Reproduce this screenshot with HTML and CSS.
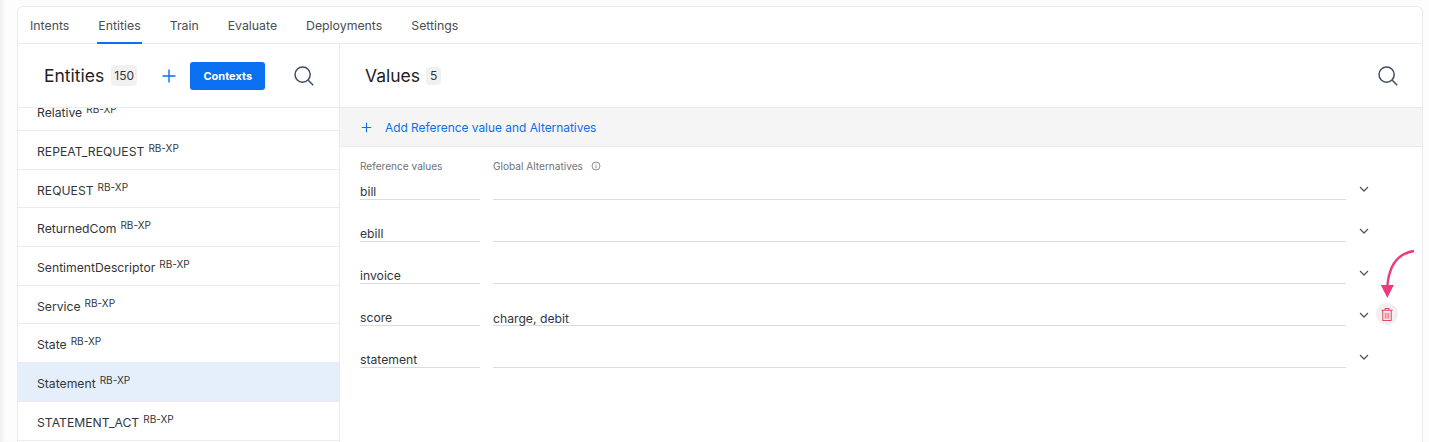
FILE: index.html
```html
<!DOCTYPE html>
<html lang="en">
<head>
<meta charset="utf-8">
<title>Entities</title>
<link rel="stylesheet" href="styles.css">
</head>
<body>
<div class="card">
  <nav class="tabs">
    <a class="tab">Intents</a>
    <a class="tab active">Entities</a>
    <a class="tab">Train</a>
    <a class="tab">Evaluate</a>
    <a class="tab">Deployments</a>
    <a class="tab">Settings</a>
  </nav>
  <div class="panes">
    <aside class="left">
      <header class="left-head">
        <h2 class="title">Entities</h2>
        <span class="count count-big">150</span>
        <svg class="plus plus-big" viewBox="0 0 14 14"><path d="M7 0.5v13M0.5 7h13"/></svg>
        <button class="contexts">Contexts</button>
        <svg class="search search-left" viewBox="0 0 20 20"><circle cx="8.6" cy="8.6" r="7.6"/><path d="M14.2 14.2l5 5"/></svg>
      </header>
      <ul class="list">
        <li class="item first"><span class="name">Relative</span><sup class="tag">RB-XP</sup></li>
        <li class="item"><span class="name">REPEAT_REQUEST</span><sup class="tag">RB-XP</sup></li>
        <li class="item"><span class="name">REQUEST</span><sup class="tag">RB-XP</sup></li>
        <li class="item"><span class="name">ReturnedCom</span><sup class="tag">RB-XP</sup></li>
        <li class="item"><span class="name">SentimentDescriptor</span><sup class="tag">RB-XP</sup></li>
        <li class="item"><span class="name">Service</span><sup class="tag">RB-XP</sup></li>
        <li class="item"><span class="name">State</span><sup class="tag">RB-XP</sup></li>
        <li class="item selected"><span class="name">Statement</span><sup class="tag">RB-XP</sup></li>
        <li class="item"><span class="name">STATEMENT_ACT</span><sup class="tag">RB-XP</sup></li>
      </ul>
    </aside>
    <main class="right">
      <header class="right-head">
        <h2 class="title">Values</h2>
        <span class="count count-small">5</span>
        <svg class="search search-right" viewBox="0 0 20 20"><circle cx="8.6" cy="8.6" r="7.6"/><path d="M14.2 14.2l5 5"/></svg>
      </header>
      <div class="add-bar">
        <svg class="plus plus-small" viewBox="0 0 14 14"><path d="M7 1v12M1 7h12"/></svg>
        <span class="add-text">Add Reference value and Alternatives</span>
      </div>
      <div class="table">
        <div class="labels">
          <span class="label label-ref">Reference values</span>
          <span class="label">Global Alternatives</span>
          <svg class="info" viewBox="0 0 10 10"><circle cx="5" cy="5" r="4"/><path d="M5 4.400v3M5 2.600v.9"/></svg>
        </div>
        <div class="row">
          <span class="cell cell-ref">bill</span><span class="cell cell-alt"></span>
          <svg class="chev" viewBox="0 0 10 6"><path d="M1 1l4 4 4-4"/></svg>
        </div>
        <div class="row">
          <span class="cell cell-ref">ebill</span><span class="cell cell-alt"></span>
          <svg class="chev" viewBox="0 0 10 6"><path d="M1 1l4 4 4-4"/></svg>
        </div>
        <div class="row">
          <span class="cell cell-ref">invoice</span><span class="cell cell-alt"></span>
          <svg class="chev" viewBox="0 0 10 6"><path d="M1 1l4 4 4-4"/></svg>
        </div>
        <div class="row">
          <span class="cell cell-ref">score</span><span class="cell cell-alt">charge, debit</span>
          <svg class="chev" viewBox="0 0 10 6"><path d="M1 1l4 4 4-4"/></svg>
          <span class="trash-btn">
            <svg class="trash" viewBox="0 0 14 16"><path d="M1 3.500h12M5 3.500V1.500h4v2M2.500 3.500v11h9v-11"/><path class="trash-bars" d="M5.200 6v6.500M7 6v6.500M8.800 6v6.500"/></svg>
          </span>
        </div>
        <div class="row">
          <span class="cell cell-ref">statement</span><span class="cell cell-alt"></span>
          <svg class="chev" viewBox="0 0 10 6"><path d="M1 1l4 4 4-4"/></svg>
        </div>
      </div>
      <svg class="arrow" viewBox="0 0 36 50"><path class="arrow-line" d="M34 2C20 4 9 14 7.300 38"/><path class="arrow-head" d="M0.800 36h13l-6.500 13z"/></svg>
    </main>
  </div>
</div>
</body>
</html>
```
FILE: styles.css
```css
* { box-sizing: border-box; }
html, body { height: 100%; }
body {
  margin: 0;
  height: 442px;
  overflow: hidden;
  background: #fdfdfd;
  box-shadow: inset 4px 0 3px -1px #f1f1f1;
  padding: 6px 6px 0 17px;
  font-family: Inter, "Noto Sans", sans-serif;
  color: #33353a;
}
.card {
  height: 440px;
  background: #fff;
  border: 1px solid #ebebeb;
  border-bottom: 0;
  border-radius: 6px 6px 0 0;
  display: flex;
  flex-direction: column;
}
.tabs {
  display: flex;
  height: 37px;
  flex: none;
  gap: 27px;
  padding-left: 11px;
  border-bottom: 1px solid #ebebeb;
}
.tab {
  font-size: 12.3px;
  color: #4a4d52;
  line-height: 37px;
  height: 37px;
  padding: 0 1px;
}
.tab.active { border-bottom: 2px solid #0a6ff0; }
.panes { display: flex; flex: 1; min-height: 0; }
.left { width: 322px; flex: none; border-right: 1px solid #ebebeb; display: flex; flex-direction: column; }
.left-head, .right-head {
  height: 64px;
  flex: none;
  display: flex;
  align-items: center;
  border-bottom: 1px solid #ebebeb;
}
.left-head { padding-left: 26px; }
.right-head { padding-left: 25px; padding-right: 24px; }
.title { margin: 0; font-size: 17.5px; font-weight: 400; color: #1f2125; }
.count {
  text-align: center;
  font-size: 12px;
  color: #33353a;
  background: #f1f1f1;
  border-radius: 4px;
}
.count-big { margin-left: 7px; width: 26px; height: 21px; line-height: 21px; }
.count-small { margin-left: 6px; width: 15px; height: 18px; line-height: 18px; }
.plus { fill: none; stroke: #0a6ff0; stroke-width: 1.4; flex: none; }
.plus-big { width: 14px; height: 14px; margin-left: 25px; }
.contexts {
  margin-left: 14px;
  width: 75px;
  height: 28px;
  border: 0;
  border-radius: 3px;
  background: #0a6ff0;
  color: #fff;
  font: 700 11px Inter, sans-serif;
  padding: 0;
}
.search { width: 20px; height: 20px; fill: none; stroke: #3f4e66; stroke-width: 1.5; flex: none; }
.search-left { margin-left: 29px; }
.search-right { margin-left: auto; }
.list { list-style: none; margin: 0; padding: 0; overflow: hidden; flex: 1; }
.item {
  height: 38.7px;
  padding: 13px 0 0 19px;
  border-bottom: 1px solid #ebebeb;
  font-size: 12.2px;
  line-height: 16px;
  white-space: nowrap;
  color: #33353a;
}
.item.first { margin-top: -15.7px; }
.item.selected { background: #e5effb; }
.tag { font-size: 10px; line-height: 0; margin-left: 4px; vertical-align: 4px; }
.right { flex: 1; min-width: 0; display: flex; flex-direction: column; position: relative; }
.add-bar {
  height: 39px;
  flex: none;
  display: flex;
  align-items: center;
  gap: 13px;
  padding-left: 21px;
  background: #f5f5f5;
  border-bottom: 1px solid #ebebeb;
}
.plus-small { width: 11px; height: 11px; }
.add-text { font-size: 11.9px; color: #0a6ff0; }
.table { padding: 12px 0 0 20px; }
.labels { display: flex; align-items: center; height: 14px; }
.label { font-size: 10.1px; color: #6f7276; }
.label-ref { width: 133px; }
.info { width: 10px; height: 10px; margin-left: 8px; fill: none; stroke: #777; stroke-width: 0.8; }
.row { display: flex; height: 42px; align-items: flex-end; position: relative; }
.labels + .row { height: 27px; }
.cell {
  height: 17px;
  font-size: 12.2px;
  line-height: 15px;
  padding-top: 1px;
  border-bottom: 1px solid #dcdcdc;
  color: #33353a;
}
.cell-ref { width: 120px; flex: none; }
.cell-alt { width: 853px; margin-left: 13px; flex: none; padding-top: 2px; }
.chev { width: 10px; height: 6px; margin-left: 13px; margin-bottom: 8px; fill: none; stroke: #55585c; stroke-width: 1.3; flex: none; }
.trash-btn {
  position: absolute;
  left: 1016px;
  bottom: 1px;
  width: 22px;
  height: 22px;
  border-radius: 50%;
  background: #f0f0f0;
  display: flex;
  align-items: center;
  justify-content: center;
}
.trash { width: 14px; height: 15px; fill: none; stroke: #e8485f; stroke-width: 1.1; }
.trash-bars { stroke: #f08a9a; stroke-width: 1.400; }
.arrow { position: absolute; left: 1040px; top: 205px; width: 36px; height: 50px; }
.arrow-line { fill: none; stroke: #ee3b80; stroke-width: 2.4; }
.arrow-head { fill: #ee3b80; }
```
